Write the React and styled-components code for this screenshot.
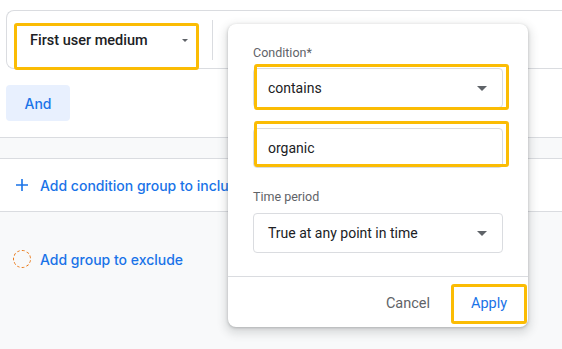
import React from "react";
import styled, { createGlobalStyle } from "styled-components";

const GlobalStyle = createGlobalStyle`
  html, body {
    margin: 0;
    padding: 0;
    background: #fff;
  }
  * {
    box-sizing: border-box;
  }
`;

const Page = styled.div`
  position: relative;
  width: 562px;
  height: 349px;
  overflow: hidden;
  display: flex;
  flex-direction: column;
  font-family: Roboto, "Liberation Sans", sans-serif;
  color: #202124;
`;

const ConditionCard = styled.div`
  margin: 10px 0 0 6px;
  height: 59px;
  border: 1px solid #dadce0;
  border-right: none;
  border-radius: 8px 0 0 8px;
  display: flex;
  align-items: flex-start;
  padding-left: 7px;
`;

const DimensionSelect = styled.div`
  margin-top: 12px;
  width: 185px;
  height: 47px;
  border: 3px solid #fbbc04;
  border-radius: 3px;
  background: #fff;
  display: flex;
  align-items: flex-start;
  justify-content: space-between;
  padding: 6px 8px 0 13px;
  font-size: 14.5px;
  font-weight: 500;
  line-height: 17px;
  color: #202124;
`;

const VDivider = styled.div`
  width: 1px;
  height: 40px;
  margin: 9px 0 0 13px;
  background: #dadce0;
`;

const Caret = styled.span`
  width: 0;
  height: 0;
  border-left: ${(p) => p.$size}px solid transparent;
  border-right: ${(p) => p.$size}px solid transparent;
  border-top: ${(p) => p.$size}px solid #5f6368;
  margin-top: ${(p) => p.$top || 0}px;
`;

const AndRow = styled.div`
  padding: 16px 0 16px 6px;
`;

const AndButton = styled.button`
  width: 64px;
  height: 36px;
  border: none;
  border-radius: 4px;
  background: #e8f0fe;
  color: #1a73e8;
  font-family: Inter, Roboto, sans-serif;
  font-size: 14px;
  font-weight: 500;
  padding: 0;
`;

const GrayBand = styled.div`
  height: 22px;
  background: #f8f9fa;
  border-top: 1px solid #dadce0;
  border-bottom: 1px solid #dadce0;
`;

const IncludeBlock = styled.div`
  height: 53px;
  border-bottom: 1px solid #dadce0;
  display: flex;
  align-items: center;
  padding-left: 16px;
`;

const ExcludeArea = styled.div`
  flex: 1;
  background: #f8f9fa;
  padding: 38px 0 0 13px;
`;

const LinkRow = styled.div`
  display: flex;
  align-items: center;
  gap: ${(p) => p.$gap}px;
  color: #1a73e8;
  font-family: Inter, Roboto, sans-serif;
  font-size: 14px;
  font-weight: 500;
  white-space: nowrap;
`;

const DashedCircle = styled.span`
  width: 18px;
  height: 18px;
  border-radius: 50%;
  border: 1px dashed #e8710a;
`;

const Popup = styled.div`
  position: absolute;
  left: 228px;
  top: 24px;
  width: 300px;
  height: 303px;
  background: #fff;
  border-radius: 8px;
  box-shadow: 0 1px 3px rgba(60, 64, 67, 0.3), 0 4px 8px 3px rgba(60, 64, 67, 0.15);
  display: flex;
  flex-direction: column;
`;

const PopupBody = styled.div`
  padding: 22px 25px 0 25px;
  height: 253px;
  border-bottom: 1px solid #dadce0;
  display: flex;
  flex-direction: column;
`;

const Label = styled.div`
  font-size: 12.5px;
  line-height: 14px;
  color: #5f6368;
  margin-bottom: ${(p) => p.$gap}px;
  margin-top: ${(p) => p.$top || 0}px;
`;

const FieldWrap = styled.div`
  position: relative;
  margin-top: ${(p) => p.$top || 0}px;
`;

const Field = styled.div`
  width: 250px;
  height: 40px;
  border: 1px solid #dadce0;
  border-radius: 4px;
  display: flex;
  align-items: center;
  justify-content: space-between;
  padding: 0 15px 0 14px;
  font-size: 14px;
  color: #202124;
`;

const Highlight = styled.div`
  position: absolute;
  left: 1px;
  right: -6px;
  top: ${(p) => p.$top}px;
  bottom: ${(p) => p.$bottom}px;
  border: 3px solid #fbbc04;
  border-radius: 3px;
  pointer-events: none;
`;

const Footer = styled.div`
  flex: 1;
  display: flex;
  align-items: center;
  justify-content: flex-end;
  padding-right: 1px;
`;

const TextButton = styled.button`
  background: none;
  border: ${(p) => (p.$highlight ? "3px solid #fbbc04" : "none")};
  border-radius: 3px;
  font-family: Roboto, "Liberation Sans", sans-serif;
  font-size: 14.5px;
  font-weight: 400;
  color: ${(p) => (p.$primary ? "#1a73e8" : "#5f6368")};
  height: 40px;
  width: ${(p) => p.$w}px;
  padding: 0;
  margin-right: ${(p) => p.$mr || 0}px;
  margin-top: 3px;
`;

export default function App() {
  return (
    <>
      <GlobalStyle />
      <Page>
        <ConditionCard>
          <DimensionSelect>
            First user medium
            <Caret $size={3.5} $top={7} />
          </DimensionSelect>
          <VDivider />
        </ConditionCard>
        <AndRow>
          <AndButton>And</AndButton>
        </AndRow>
        <GrayBand />
        <IncludeBlock>
          <LinkRow $gap={12}>
            <svg width="12" height="12" viewBox="0 0 12 12">
              <path d="M6 0v12M0 6h12" stroke="#1a73e8" strokeWidth="1.6" />
            </svg>
            Add condition group to include
          </LinkRow>
        </IncludeBlock>
        <ExcludeArea>
          <LinkRow $gap={9}>
            <DashedCircle />
            Add group to exclude
          </LinkRow>
        </ExcludeArea>

        <Popup>
          <PopupBody>
            <Label $gap={8}>Condition*</Label>
            <FieldWrap>
              <Field>
                contains
                <Caret $size={5} />
              </Field>
              <Highlight $top={-4} $bottom={-2} />
            </FieldWrap>
            <FieldWrap $top={20}>
              <Field>organic</Field>
              <Highlight $top={-7} $bottom={1} />
            </FieldWrap>
            <Label $top={22} $gap={9}>Time period</Label>
            <Field>
              True at any point in time
              <Caret $size={5} />
            </Field>
          </PopupBody>
          <Footer>
            <TextButton $w={56} $mr={15}>Cancel</TextButton>
            <TextButton $w={76} $primary $highlight>Apply</TextButton>
          </Footer>
        </Popup>
      </Page>
    </>
  );
}
